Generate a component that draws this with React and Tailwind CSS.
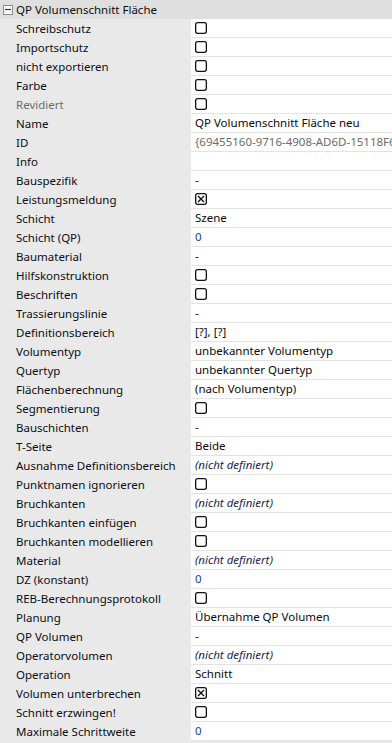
const rows = [
  { label: "Schreibschutz", type: "check" },
  { label: "Importschutz", type: "check" },
  { label: "nicht exportieren", type: "check" },
  { label: "Farbe", type: "check" },
  { label: "Revidiert", type: "check", disabled: true },
  { label: "Name", value: "QP Volumenschnitt Fläche neu" },
  { label: "ID", value: "{69455160-9716-4908-AD6D-15118F60B2C1}", kind: "gray" },
  { label: "Info", value: "" },
  { label: "Bauspezifik", value: "-" },
  { label: "Leistungsmeldung", type: "check", checked: true },
  { label: "Schicht", value: "Szene" },
  { label: "Schicht (QP)", value: "0", kind: "num" },
  { label: "Baumaterial", value: "-" },
  { label: "Hilfskonstruktion", type: "check" },
  { label: "Beschriften", type: "check" },
  { label: "Trassierungslinie", value: "-" },
  { label: "Definitionsbereich", value: "[?], [?]" },
  { label: "Volumentyp", value: "unbekannter Volumentyp" },
  { label: "Quertyp", value: "unbekannter Quertyp" },
  { label: "Flächenberechnung", value: "(nach Volumentyp)" },
  { label: "Segmentierung", type: "check" },
  { label: "Bauschichten", value: "-" },
  { label: "T-Seite", value: "Beide" },
  { label: "Ausnahme Definitionsbereich", value: "(nicht definiert)", kind: "italic" },
  { label: "Punktnamen ignorieren", type: "check" },
  { label: "Bruchkanten", value: "(nicht definiert)", kind: "italic" },
  { label: "Bruchkanten einfügen", type: "check" },
  { label: "Bruchkanten modellieren", type: "check" },
  { label: "Material", value: "(nicht definiert)", kind: "italic" },
  { label: "DZ (konstant)", value: "0", kind: "num" },
  { label: "REB-Berechnungsprotokoll", type: "check" },
  { label: "Planung", value: "Übernahme QP Volumen" },
  { label: "QP Volumen", value: "-" },
  { label: "Operatorvolumen", value: "(nicht definiert)", kind: "italic" },
  { label: "Operation", value: "Schnitt" },
  { label: "Volumen unterbrechen", type: "check", checked: true },
  { label: "Schnitt erzwingen!", type: "check" },
  { label: "Maximale Schrittweite", value: "0", kind: "num" },
];

const CheckBox = ({ checked }) => (
  <svg width="12" height="12" viewBox="0 0 12 12" className="block">
    <rect x="0.65" y="0.65" width="10.7" height="10.7" rx="2" fill="white" stroke="#111" strokeWidth="1.3" />
    {checked && <path d="M3 3 L9 9 M9 3 L3 9" stroke="#111" strokeWidth="1.4" />}
  </svg>
);

const valueClass = {
  gray: "text-[#6e6a66]",
  num: "text-[#123f8f]",
  italic: "italic text-[#1c2350]",
};

export default function App() {
  return (
    <div
      className="w-[392px] h-[743px] overflow-hidden bg-[#e9e9e9] text-[11.5px] leading-none"
      style={{ fontFamily: '"Noto Sans", "Segoe UI", sans-serif' }}
    >
      {/* category header */}
      <div className="h-[19px] flex items-center bg-[#dfdfdf]">
        <div className="ml-[3px] w-[10px] h-[10px] border border-[#8c8c8c] bg-[#f4f4f4] flex items-center justify-center">
          <div className="w-[6px] h-px bg-[#333]" />
        </div>
        <span className="ml-[3px] text-[#0e0e0e]">QP Volumenschnitt Fläche</span>
      </div>

      {rows.map((r) => (
        <div key={r.label} className="h-[19px] flex pl-[12px]">
          <div
            className={`w-[179px] pl-1 flex items-center whitespace-nowrap overflow-hidden ${
              r.disabled ? "text-[#6d6d6d]" : "text-[#0c0e16]"
            }`}
          >
            {r.label}
          </div>
          <div className="flex-1 bg-white border-b border-[#e3e3e3] pl-1 flex items-center whitespace-nowrap overflow-hidden">
            {r.type === "check" ? (
              <CheckBox checked={r.checked} />
            ) : (
              <span className={valueClass[r.kind] || "text-[#0a0a0a]"}>{r.value}</span>
            )}
          </div>
        </div>
      ))}
    </div>
  );
}
